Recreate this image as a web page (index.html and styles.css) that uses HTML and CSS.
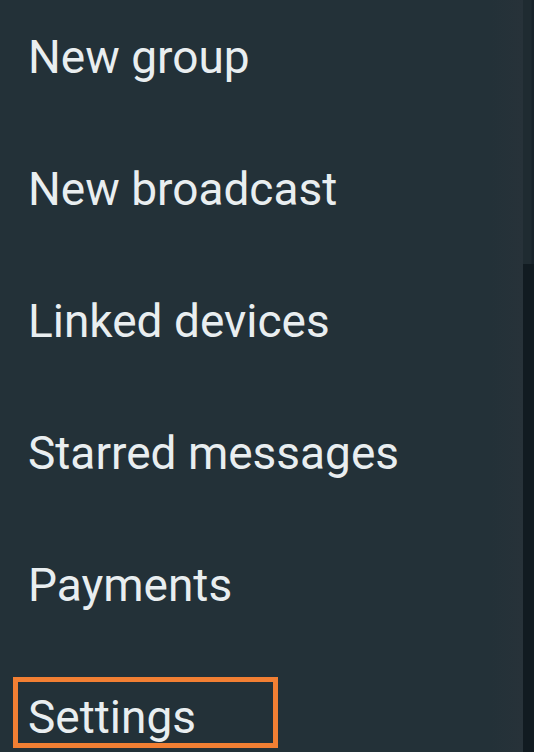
FILE: index.html
```html
<!DOCTYPE html>
<html lang="en">
<head>
<meta charset="utf-8">
<title>Menu</title>
<link rel="stylesheet" href="styles.css">
</head>
<body>
<div class="screen">
  <ul class="menu">
    <li class="item">New group</li>
    <li class="item">New broadcast</li>
    <li class="item">Linked devices</li>
    <li class="item">Starred messages</li>
    <li class="item">Payments</li>
    <li class="item item-marked"><span class="mark"></span>Settings</li>
  </ul>
  <div class="edge">
    <div class="edge-top"></div>
    <div class="edge-bottom"></div>
  </div>
</div>
</body>
</html>
```
FILE: styles.css
```css
html, body {
  margin: 0;
  padding: 0;
  height: 100%;
  overflow: hidden;
  background: #233138;
}
.screen {
  display: flex;
  height: 752px;
  overflow: hidden;
}
.menu {
  flex: 1;
  list-style: none;
  margin: -9px 0 0 0;
  padding: 0;
  background: linear-gradient(to right, #233138 0, #233138 490px, #273239 523px);
}
.item {
  position: relative;
  height: 132px;
  display: flex;
  align-items: center;
  padding-left: 28px;
  font-family: Roboto, "Noto Sans", sans-serif;
  font-size: 46px;
  color: #e9eef0;
}
.mark {
  position: absolute;
  left: 13px;
  top: 26px;
  width: 255px;
  height: 61px;
  border: 5px solid #f27f33;
}
.edge {
  width: 11px;
  display: flex;
  flex-direction: column;
}
.edge-top {
  height: 264px;
  background: linear-gradient(to right, #1f2b31 0, #1f2b31 8px, #18232a 9px, #18232a 11px);
}
.edge-bottom {
  flex: 1;
  background: #111b21;
}
```
